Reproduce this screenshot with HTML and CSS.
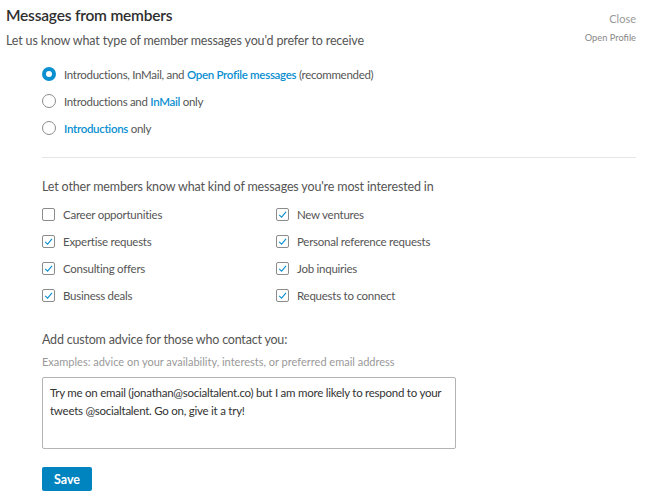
FILE: index.html
```html
<!DOCTYPE html>
<html>
<head>
<meta charset="utf-8">
<link rel="stylesheet" href="styles.css">
</head>
<body>
<div class="panel">
  <div class="header">
    <div class="titles">
      <h1 class="title">Messages from members</h1>
      <p class="subtitle">Let us know what type of member messages you'd prefer to receive</p>
    </div>
    <div class="actions">
      <span class="close">Close</span>
      <span class="open-profile">Open Profile</span>
    </div>
  </div>
  <div class="content">
    <div class="radios">
      <div class="radio-row">
        <span class="radio radio-on"></span>
        <span class="label">Introductions, InMail, and <b class="link">Open Profile messages</b> (recommended)</span>
      </div>
      <div class="radio-row">
        <span class="radio"></span>
        <span class="label">Introductions and <b class="link">InMail</b> only</span>
      </div>
      <div class="radio-row">
        <span class="radio"></span>
        <span class="label"><b class="link">Introductions</b> only</span>
      </div>
    </div>
    <div class="divider"></div>
    <p class="section-label">Let other members know what kind of messages you're most interested in</p>
    <div class="checks">
      <div class="check-row"><span class="box"></span><span class="label">Career opportunities</span></div>
      <div class="check-row"><span class="box checked"><svg viewBox="0 0 13 13" width="13" height="13"><path d="M3.2 6.8 L5.6 9.2 L10 3.8" fill="none" stroke="#0a8fd1" stroke-width="1.1"/></svg></span><span class="label">New ventures</span></div>
      <div class="check-row"><span class="box checked"><svg viewBox="0 0 13 13" width="13" height="13"><path d="M3.2 6.8 L5.6 9.2 L10 3.8" fill="none" stroke="#0a8fd1" stroke-width="1.1"/></svg></span><span class="label">Expertise requests</span></div>
      <div class="check-row"><span class="box checked"><svg viewBox="0 0 13 13" width="13" height="13"><path d="M3.2 6.8 L5.6 9.2 L10 3.8" fill="none" stroke="#0a8fd1" stroke-width="1.1"/></svg></span><span class="label">Personal reference requests</span></div>
      <div class="check-row"><span class="box checked"><svg viewBox="0 0 13 13" width="13" height="13"><path d="M3.2 6.8 L5.6 9.2 L10 3.8" fill="none" stroke="#0a8fd1" stroke-width="1.1"/></svg></span><span class="label">Consulting offers</span></div>
      <div class="check-row"><span class="box checked"><svg viewBox="0 0 13 13" width="13" height="13"><path d="M3.2 6.8 L5.6 9.2 L10 3.8" fill="none" stroke="#0a8fd1" stroke-width="1.1"/></svg></span><span class="label">Job inquiries</span></div>
      <div class="check-row"><span class="box checked"><svg viewBox="0 0 13 13" width="13" height="13"><path d="M3.2 6.8 L5.6 9.2 L10 3.8" fill="none" stroke="#0a8fd1" stroke-width="1.1"/></svg></span><span class="label">Business deals</span></div>
      <div class="check-row"><span class="box checked"><svg viewBox="0 0 13 13" width="13" height="13"><path d="M3.2 6.8 L5.6 9.2 L10 3.8" fill="none" stroke="#0a8fd1" stroke-width="1.1"/></svg></span><span class="label">Requests to connect</span></div>
    </div>
    <p class="advice-label">Add custom advice for those who contact you:</p>
    <p class="hint">Examples: advice on your availability, interests, or preferred email address</p>
    <div class="textarea">Try me on email (jonathan@socialtalent.co) but I am more likely to respond to your tweets @socialtalent. Go on, give it a try!</div>
    <button class="save">Save</button>
  </div>
</div>
</body>
</html>
```

FILE: styles.css
```css
body {
  margin: 0;
  background: #fff;
  font-family: Lato, "Open Sans", sans-serif;
  color: #4d4d4d;
}
.panel {
  padding: 4px 13px 0 6px;
}
.header {
  display: flex;
  justify-content: space-between;
}
.title {
  margin: 0;
  font-size: 15.5px;
  font-weight: 600;
  color: #2f2f2f;
  line-height: 22px;
  letter-spacing: -0.2px;
}
.subtitle {
  margin: 6px 0 0;
  font-size: 12.5px;
  line-height: 18px;
  color: #555;
  letter-spacing: -0.15px;
}
.actions {
  display: flex;
  flex-direction: column;
  align-items: flex-end;
  padding-top: 8px;
}
.close {
  font-size: 11px;
  color: #999;
  line-height: 14px;
}
.open-profile {
  margin-top: 6px;
  font-size: 9.3px;
  color: #888;
  line-height: 12px;
}
.content {
  padding-left: 36px;
}
.radios {
  margin-top: 15px;
  display: flex;
  flex-direction: column;
  gap: 9px;
}
.radio-row, .check-row {
  display: flex;
  align-items: center;
  gap: 8px;
  height: 18px;
  font-size: 11.5px;
  color: #555;
}
.radio-row .label {
  letter-spacing: -0.3px;
}
.check-row .label {
  letter-spacing: -0.25px;
}
.radio {
  width: 12px;
  height: 12px;
  border: 1px solid #8c8c8c;
  border-radius: 50%;
  flex: none;
}
.radio-on {
  width: 6px;
  height: 6px;
  border: 4px solid #0a8fd1;
  background: #fff;
}
.link {
  color: #0a8fd1;
  font-weight: 600;
}
.divider {
  margin-top: 20px;
  height: 1px;
  background: #e6e6e6;
}
.section-label {
  margin: 20px 0 0;
  font-size: 12.5px;
  line-height: 18px;
  color: #555;
  letter-spacing: -0.15px;
}
.checks {
  margin-top: 9px;
  display: grid;
  grid-template-columns: 234px 1fr;
  row-gap: 9px;
}
.box {
  width: 11px;
  height: 11px;
  border: 1px solid #8c8c8c;
  border-radius: 2px;
  flex: none;
  position: relative;
}
.box svg {
  position: absolute;
  left: -1px;
  top: -1px;
}
.advice-label {
  margin: 27px 0 0;
  font-size: 12.5px;
  line-height: 18px;
  color: #555;
  letter-spacing: -0.2px;
}
.hint {
  margin: 6px 0 0;
  font-size: 11px;
  line-height: 14px;
  color: #999;
}
.textarea {
  margin-top: 8px;
  width: 398px;
  height: 56px;
  padding: 6px 7px 8px;
  border: 1px solid #b3b3b3;
  border-radius: 2px;
  font-size: 11.5px;
  line-height: 18px;
  color: #333;
  letter-spacing: -0.25px;
}
.save {
  display: block;
  margin-top: 18px;
  width: 50px;
  height: 24px;
  border: none;
  border-radius: 2px;
  background: #0084bf;
  color: #fff;
  font-family: inherit;
  font-size: 12.5px;
  font-weight: 700;
  padding: 0;
}
```
